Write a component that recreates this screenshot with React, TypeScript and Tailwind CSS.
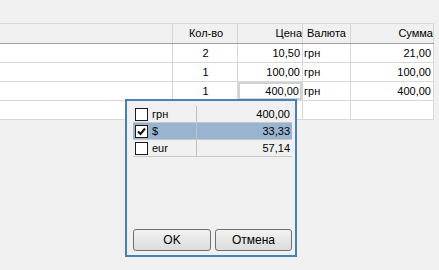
import React from "react";

const ROWS = [
  { qty: "2", price: "10,50", cur: "грн", sum: "21,00" },
  { qty: "1", price: "100,00", cur: "грн", sum: "100,00" },
  { qty: "1", price: "400,00", cur: "грн", sum: "400,00", editing: true },
];

const CURRENCIES = [
  { name: "грн", value: "400,00", checked: false },
  { name: "$", value: "33,33", checked: true },
  { name: "eur", value: "57,14", checked: false },
];

const cols = "grid grid-cols-[173px_65px_65px_48px_83px]";

function CheckBox({ checked }: { checked: boolean }) {
  return (
    <span className="w-[13px] h-[13px] border border-[#1c1c1c] bg-white flex items-center justify-center shrink-0">
      {checked && (
        <svg width="9" height="9" viewBox="0 0 9 9">
          <path d="M1 4.5 L3.5 7 L8 1.5" fill="none" stroke="#111" strokeWidth="2" />
        </svg>
      )}
    </span>
  );
}

export default function App() {
  return (
    <div
      className="relative w-[439px] h-[270px] bg-[#f0f0f0] text-[11px] text-black overflow-hidden"
      style={{ fontFamily: '"Liberation Sans", Arial, sans-serif' }}
    >
      <div className="h-[23px]" />

      {/* Grid */}
      <div className="w-[434px] border-t border-[#d9d9d9] bg-white">
        <div className={`${cols} h-[20px] bg-[#f0f0f0] border-b border-[#a0a0a0] leading-[19px]`}>
          <div className="border-r border-[#d5d5d5]" />
          <div className="border-r border-[#d5d5d5] text-center pl-[2px]">Кол-во</div>
          <div className="border-r border-[#d5d5d5] text-right overflow-hidden whitespace-nowrap">Цена</div>
          <div className="border-r border-[#d5d5d5] pl-[4px]">Валюта</div>
          <div className="border-r border-[#d5d5d5] text-right overflow-hidden whitespace-nowrap">Сумма</div>
        </div>

        {ROWS.map((r, i) => (
          <div key={i} className={`${cols} h-[19px] leading-[18px]`}>
            <div className="border-r border-b border-[#d8d8d8]" />
            <div className="border-r border-b border-[#d8d8d8] text-center pl-[1px]">{r.qty}</div>
            {r.editing ? (
              <div className="border-r border-b border-[#d8d8d8] bg-[#d2d2d2] p-[2px]">
                <div className="bg-white h-full text-right pr-[1px] leading-[14px]">{r.price}</div>
              </div>
            ) : (
              <div className="border-r border-b border-[#d8d8d8] text-right pr-[2px]">{r.price}</div>
            )}
            <div className="border-r border-b border-[#d8d8d8] pl-[1px]">{r.cur}</div>
            <div className="border-r border-b border-[#d8d8d8] text-right pr-[2px]">{r.sum}</div>
          </div>
        ))}

        <div className={`${cols} h-[19px]`}>
          <div className="border-r border-b border-[#d8d8d8]" />
          <div className="border-r border-b border-[#d8d8d8]" />
          <div className="border-r border-b border-[#d8d8d8]" />
          <div className="border-r border-b border-[#d8d8d8]" />
          <div className="border-r border-b border-[#d8d8d8]" />
        </div>
      </div>

      {/* Currency popup */}
      <div className="absolute left-[125px] top-[99px] w-[172px] h-[158px] border-2 border-[#4a80b8] bg-[#f0f0f0] pl-[6px] pr-[3px] pt-[5px] pb-[4px] flex flex-col">
        <div className="flex flex-col">
          {CURRENCIES.map((c) => (
            <div
              key={c.name}
              className={`flex h-[17px] border-b border-[#c8c8c8] ${c.checked ? "bg-[#99b4d1]" : ""}`}
            >
              <div className="w-[64px] border-r border-[#c0c0c0] flex items-center gap-[4px] pl-[2px]">
                <CheckBox checked={c.checked} />
                <span className="leading-none">{c.name}</span>
              </div>
              <div className="flex-1 text-right pr-[2px] leading-[16px]">{c.value}</div>
            </div>
          ))}
        </div>

        <div className="mt-auto flex gap-[4px]">
          <button className="w-[78px] h-[22px] rounded-[3px] border border-[#707070] bg-gradient-to-b from-[#f2f2f2] to-[#dcdcdc] text-[12px] leading-none">
            OK
          </button>
          <button className="w-[77px] h-[22px] rounded-[3px] border border-[#707070] bg-gradient-to-b from-[#f2f2f2] to-[#dcdcdc] text-[12px] leading-none">
            Отмена
          </button>
        </div>
      </div>
    </div>
  );
}
